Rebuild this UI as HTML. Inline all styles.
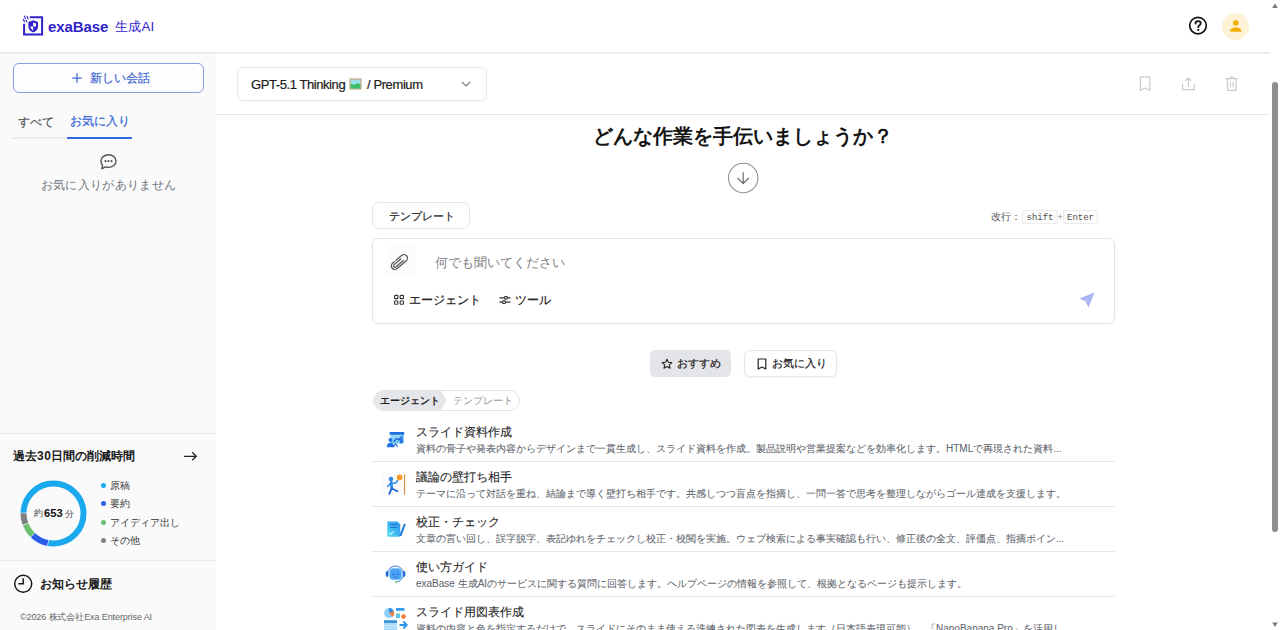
<!DOCTYPE html>
<html lang="ja"><head><meta charset="utf-8">
<style>
*{box-sizing:border-box;margin:0;padding:0}
html,body{width:1280px;height:630px;overflow:hidden;background:#fff}
body{font-family:"Liberation Sans",sans-serif;color:#1f2328;position:relative}
.a{position:absolute;white-space:nowrap}
.hdr{left:0;top:0;width:1270px;height:54px;border-bottom:2px solid #ececec;background:#fff}
.side{left:0;top:54px;width:216px;height:576px;background:#fafafa}
.ln{position:absolute;height:1px;background:#e8e8e8}
.t{line-height:1;position:absolute;white-space:nowrap}
.kbd{position:absolute;top:209.5px;height:14px;padding-top:1px;border:1px solid #ececec;border-radius:2px;background:#fcfcfc;font-family:"Liberation Mono",monospace;font-size:9px;line-height:12px;color:#505050;text-align:center}
.row-t{position:absolute;left:416px;font-size:11.6px;line-height:14px;color:#1e1e1e;-webkit-text-stroke:0.1px #1e1e1e}
.row-d{position:absolute;left:416px;font-size:10px;line-height:12px;color:#63676e;-webkit-text-stroke:0.08px #63676e;width:650px;overflow:hidden;white-space:nowrap}
.md{-webkit-text-stroke:0.2px currentColor}
.sep{position:absolute;left:372px;width:743px;height:1px;background:#e9e9eb}
</style></head><body>

<!-- header -->
<div class="a hdr"></div>
<svg class="a" style="left:18px;top:10px" width="32" height="32" viewBox="18 10 32 32">
  <path d="M29.8 17.35 H42.1 V34.6 H24.1 V23.7" fill="none" stroke="#2f22c9" stroke-width="2"/>
  <path d="M24.2 15.9 L25.3 18.5 M26.9 16.3 L28.2 18.9 M23.3 19.3 L24.4 21.7 M26 20.1 L26.9 21.9" stroke="#2f22c9" stroke-width="1.1" stroke-linecap="round"/>
  <path d="M33.2 20.2 L38 21.9 V26.5 C38 29.5 36 31.5 33.2 32.6 C30.4 31.5 28.4 29.5 28.4 26.5 V21.9 Z" fill="#2f22c9"/>
  <path d="M33.2 22.6 L36 23.5 V26.5 H33.2 Z M30.3 26.5 H33.2 V30.4 C31.7 29.6 30.6 28.3 30.3 26.5 Z" fill="#fff"/>
</svg>
<div class="t" style="left:48px;top:18.6px;font-size:15px;font-weight:bold;color:#2f22c9;letter-spacing:-0.1px">exaBase</div>
<div class="t" style="left:115px;top:20px;font-size:13.2px;color:#2f22c9;letter-spacing:0.2px">生成AI</div>

<svg class="a" style="left:1188px;top:16px" width="20" height="20" viewBox="0 0 20 20">
  <circle cx="10" cy="9.6" r="8.3" fill="none" stroke="#111" stroke-width="1.7"/>
  <path d="M7.5 7.6 C7.5 6 8.7 5.1 10.1 5.1 C11.6 5.1 12.7 6 12.7 7.4 C12.7 9 10.3 9.3 10.3 11.2" fill="none" stroke="#111" stroke-width="1.8" stroke-linecap="round"/>
  <circle cx="10.3" cy="13.9" r="1.1" fill="#111"/>
</svg>
<div class="a" style="left:1222px;top:12.6px;width:27.4px;height:27.4px;border-radius:50%;background:#fdf2d6"></div>
<svg class="a" style="left:1226px;top:17px" width="19" height="19" viewBox="0 0 19 19">
  <circle cx="9.8" cy="6" r="2.8" fill="#f2b000"/>
  <path d="M4.4 14.8 V13.2 C4.4 11.3 6.8 10.4 9.8 10.4 C12.8 10.4 15.2 11.3 15.2 13.2 V14.8 Z" fill="#f2b000"/>
</svg>

<!-- scrollbar -->
<div class="a" style="left:1270px;top:0;width:10px;height:630px;background:#fff"></div>
<svg class="a" style="left:1270px;top:0" width="10" height="630">
  <path d="M2.2 8 L5 3.5 L7.8 8 Z" fill="#7a7a7a"/>
  <path d="M2.2 622.5 L5 627 L7.8 622.5 Z" fill="#7a7a7a"/>
  <rect x="2" y="82" width="6" height="450" rx="3" fill="#8e8e8e"/>
</svg>

<!-- sidebar -->
<div class="a side"></div>
<div class="a" style="left:13px;top:63px;width:191px;height:30px;border:1px solid #8a9de0;border-radius:6px;background:#fdfdff"></div>
<svg class="a" style="left:71px;top:72px" width="12" height="12" viewBox="0 0 12 12"><path d="M6 1.2 V10.8 M1.2 6 H10.8" stroke="#3f68d0" stroke-width="1.25"/></svg>
<div class="t md" style="left:90px;top:72px;font-size:11.5px;line-height:13px;color:#3f68d0">新しい会話</div>

<div class="t md" style="left:18px;top:114.5px;font-size:11.5px;line-height:14px;color:#555">すべて</div>
<div class="t md" style="left:70px;top:114px;font-size:12px;line-height:14px;color:#2f63d6">お気に入り</div>
<div class="a" style="left:12px;top:137px;width:54px;height:2px;background:#ececec"></div>
<div class="a" style="left:67px;top:137px;width:65px;height:2px;background:#2f6ad8"></div>

<svg class="a" style="left:99px;top:153px" width="19" height="18" viewBox="0 0 19 18">
  <path d="M9.5 1.8 C13.8 1.8 17 4.6 17 8.1 C17 11.6 13.8 14.4 9.5 14.4 C8.4 14.4 7.4 14.2 6.5 13.9 L2.8 15.8 L3.6 12.4 C2.6 11.2 2 9.7 2 8.1 C2 4.6 5.2 1.8 9.5 1.8 Z" fill="none" stroke="#555" stroke-width="1.4" stroke-linejoin="round"/>
  <circle cx="6.5" cy="8.1" r="1.1" fill="#555"/><circle cx="9.5" cy="8.1" r="1.1" fill="#555"/><circle cx="12.5" cy="8.1" r="1.1" fill="#555"/>
</svg>
<div class="t" style="left:40.5px;top:178px;font-size:12px;line-height:14px;color:#73767b;letter-spacing:0.35px">お気に入りがありません</div>

<div class="ln" style="left:0;top:433px;width:216px"></div>
<div class="t" style="left:13px;top:449px;font-size:12px;line-height:14px;font-weight:bold;color:#1a1a1a">過去<span style="letter-spacing:0.5px">30</span>日間の削減時間</div>
<svg class="a" style="left:182px;top:449px" width="16" height="14" viewBox="0 0 16 14"><path d="M2 7.3 H14.3 M10.2 3.3 L14.3 7.3 L10.2 11.3" fill="none" stroke="#222" stroke-width="1.25"/></svg>

<svg class="a" style="left:20px;top:480px" width="67" height="67" viewBox="-33.5 -33.5 67 67"><g transform="rotate(-90)" fill="none" stroke-width="6"><circle r="30" stroke="#1aa9ee" stroke-dasharray="145.87 42.62" stroke-dashoffset="-141.90"/><circle r="30" stroke="#2a5ee8" stroke-dasharray="16.91 171.58" stroke-dashoffset="-99.90"/><circle r="30" stroke="#6bbf6e" stroke-dasharray="12.51 175.98" stroke-dashoffset="-117.44"/><circle r="30" stroke="#808080" stroke-dasharray="10.68 177.81" stroke-dashoffset="-130.59"/></g></svg>
<div class="t" style="left:34px;top:507px;font-size:9px;line-height:12px;color:#444">約</div>
<div class="t" style="left:44px;top:507px;font-size:11.2px;line-height:13px;font-weight:bold;color:#111">653</div>
<div class="t" style="left:64.5px;top:507.5px;font-size:8.6px;line-height:12px;color:#444">分</div>

<div class="a" style="left:101px;top:483px;width:5px;height:5px;border-radius:50%;background:#1aa9ee"></div>
<div class="a" style="left:101px;top:501px;width:5px;height:5px;border-radius:50%;background:#2a5ee8"></div>
<div class="a" style="left:101px;top:520px;width:5px;height:5px;border-radius:50%;background:#6bbf6e"></div>
<div class="a" style="left:101px;top:538px;width:5px;height:5px;border-radius:50%;background:#808080"></div>
<div class="t" style="left:110px;top:479px;font-size:10px;line-height:13px;color:#333">原稿</div>
<div class="t" style="left:110px;top:497px;font-size:10px;line-height:13px;color:#333">要約</div>
<div class="t" style="left:110px;top:516px;font-size:10px;line-height:13px;color:#333">アイディア出し</div>
<div class="t" style="left:110px;top:534px;font-size:10px;line-height:13px;color:#333">その他</div>

<div class="ln" style="left:0;top:560px;width:216px"></div>
<svg class="a" style="left:13px;top:574px" width="20" height="20" viewBox="0 0 20 20">
  <circle cx="10.2" cy="9.8" r="8.5" fill="none" stroke="#1a1a1a" stroke-width="1.5"/>
  <path d="M10.2 4.3 V9.8 H5.3" fill="none" stroke="#1a1a1a" stroke-width="1.5"/>
</svg>
<div class="t" style="left:40px;top:577px;font-size:11.6px;line-height:14px;font-weight:bold;color:#1a1a1a">お知らせ履歴</div>
<div class="t" style="left:20px;top:612px;font-size:9px;line-height:11px;color:#666;letter-spacing:-0.1px">©2026 株式会社Exa Enterprise AI</div>

<!-- main toolbar -->
<div class="ln" style="left:216px;top:114px;width:1054px"></div>
<div class="a" style="left:237px;top:67px;width:250px;height:34px;border:1px solid #e8e8e8;border-radius:6px;background:#fff;box-shadow:0 1px 2px rgba(0,0,0,0.04)"></div>
<div class="t" style="left:251px;top:77px;font-size:13px;line-height:15px;color:#1a1a1a;letter-spacing:-0.42px;-webkit-text-stroke:0.2px #1a1a1a">GPT-5.1 Thinking</div>
<svg class="a" style="left:349px;top:78px" width="13" height="12" viewBox="0 0 14 14" preserveAspectRatio="none">
  <rect x="0.5" y="0.5" width="13" height="13" fill="#c9a27c"/>
  <rect x="1.8" y="1.8" width="10.4" height="10.4" fill="#9fe0e8"/>
  <path d="M1.8 6.5 L5 8 L9 6 L12.2 7 V12.2 H1.8 Z" fill="#3cc06a"/>
</svg>
<div class="t" style="left:367px;top:77px;font-size:13px;line-height:15px;color:#1a1a1a;letter-spacing:-0.4px;-webkit-text-stroke:0.2px #1a1a1a">/ Premium</div>
<svg class="a" style="left:460px;top:80px" width="12" height="8" viewBox="0 0 12 8"><path d="M2 2 L6 6 L10 2" fill="none" stroke="#777" stroke-width="1.1"/></svg>

<svg class="a" style="left:1137px;top:75px" width="17" height="17" viewBox="0 0 17 17"><path d="M3.4 1.8 H12.8 V15.4 L8.1 12.9 L3.4 15.4 Z" fill="none" stroke="#c9c9c9" stroke-width="1.15" stroke-linejoin="round"/></svg>
<svg class="a" style="left:1180px;top:75px" width="17" height="17" viewBox="0 0 17 17"><path d="M8.3 3.2 V11.5 M5.6 5.6 L8.3 2.9 L11 5.6 M2.6 9.2 V14.6 H14.2 V9.2" fill="none" stroke="#c9c9c9" stroke-width="1.15" stroke-linejoin="round" stroke-linecap="round"/></svg>
<svg class="a" style="left:1223px;top:75px" width="17" height="17" viewBox="0 0 17 17"><path d="M2.8 3.6 H14.6 M6.6 3.4 C6.6 2.3 7.4 1.7 8.7 1.7 C10 1.7 10.8 2.3 10.8 3.4 M4.1 3.6 L4.5 15.3 H12.9 L13.3 3.6 M7.3 6.6 V12.3 M10.1 6.6 V12.3" fill="none" stroke="#c9c9c9" stroke-width="1.15" stroke-linejoin="round"/></svg>

<!-- hero -->
<div class="t" style="left:593px;top:126px;width:300px;text-align:center;font-size:20px;line-height:20px;font-weight:bold;color:#141414">どんな作業を手伝いましょうか？</div>
<svg class="a" style="left:727px;top:162px" width="32" height="32" viewBox="0 0 32 32">
  <circle cx="16.2" cy="16" r="14.7" fill="#fff" stroke="#8f9296" stroke-width="1.1"/>
  <path d="M16.2 10.2 V21.2 M10.4 15.8 L16.2 21.4 L22 15.8" fill="none" stroke="#5c6168" stroke-width="1.1"/>
</svg>

<!-- composer -->
<div class="a" style="left:371.5px;top:202px;width:98px;height:27px;border:1px solid #e6e6e6;border-radius:7px;background:#fff"></div>
<div class="t md" style="left:389px;top:209.5px;font-size:11px;line-height:13px;color:#2a2a2a">テンプレート</div>
<div class="t" style="left:991px;top:210.5px;font-size:10px;line-height:12px;color:#555">改行：</div>
<div class="kbd" style="left:1022px;width:36px">shift</div>
<div class="t" style="left:1057.5px;top:211px;font-size:9px;line-height:12px;color:#888">+</div>
<div class="kbd" style="left:1063px;width:35px">Enter</div>

<div class="a" style="left:372px;top:238px;width:743px;height:86px;border:1px solid #e4e4e4;border-radius:6px;background:#fff;box-shadow:0 1px 3px rgba(0,0,0,0.04)"></div>
<div class="a" style="left:386px;top:245px;width:30px;height:32px;border-radius:4px;background:#fcfcfc"></div>
<svg class="a" style="left:386px;top:248px" width="28" height="28" viewBox="-14 -14 28 28">
  <g transform="translate(-0.6,0) rotate(-41)" fill="none" stroke="#555" stroke-width="1.25" stroke-linecap="round">
    <path d="M-1.5 -3.5 H6 A3.5 3.5 0 0 1 6 3.5 H-6 A3.5 3.5 0 0 1 -6 -3.5 H-3.5"/>
    <path d="M3 -1.4 H-6 A1.4 1.4 0 0 0 -6 1.4 H4"/>
  </g>
</svg>
<div class="t" style="left:434.5px;top:254.5px;font-size:13.2px;line-height:15px;color:#7f8288">何でも聞いてください</div>

<svg class="a" style="left:393px;top:294px" width="12" height="12" viewBox="0 0 12 12" fill="none" stroke="#333" stroke-width="1.1">
  <rect x="1.55" y="1.35" width="3.3" height="3.3" rx="0.7"/><rect x="7.15" y="1.35" width="3.3" height="3.3" rx="0.7"/>
  <rect x="1.55" y="6.95" width="3.3" height="3.3" rx="0.7"/><rect x="7.15" y="6.95" width="3.3" height="3.3" rx="0.7"/>
</svg>
<div class="t md" style="left:409px;top:293px;font-size:12px;line-height:14px;color:#222">エージェント</div>
<svg class="a" style="left:498px;top:293px" width="14" height="14" viewBox="0 0 14 14" fill="none" stroke="#333" stroke-width="1.2">
  <path d="M1.5 4.8 H6.5 M9.5 4.8 H12.5 M1.5 9.2 H4.5 M7.5 9.2 H12.5"/>
  <circle cx="8" cy="4.8" r="1.5"/><circle cx="6" cy="9.2" r="1.5"/>
</svg>
<div class="t md" style="left:515px;top:293px;font-size:12px;line-height:14px;color:#222">ツール</div>
<svg class="a" style="left:1078px;top:291px" width="18" height="18" viewBox="0 0 18 18">
  <path d="M16.5 1.5 L1.5 7.5 L7.5 10.5 L10.5 16.5 Z" fill="#a9b6f5"/>
  <path d="M7.2 10.8 L9.2 8.8" stroke="#fff" stroke-width="0.8"/>
</svg>

<!-- tabs -->
<div class="a" style="left:650px;top:350px;width:81px;height:27px;border-radius:5px;background:#e3e5e8"></div>
<svg class="a" style="left:661px;top:358px" width="12" height="12" viewBox="0 0 12 12"><path d="M6 1.2 L7.45 4.3 L10.8 4.65 L8.3 6.9 L9 10.2 L6 8.5 L3 10.2 L3.7 6.9 L1.2 4.65 L4.55 4.3 Z" fill="none" stroke="#222" stroke-width="1.1" stroke-linejoin="round"/></svg>
<div class="t md" style="left:677px;top:357px;font-size:11px;line-height:13px;color:#222">おすすめ</div>
<div class="a" style="left:744px;top:350px;width:93px;height:27px;border:1px solid #e6e6e6;border-radius:6px;background:#fff;box-shadow:0 1px 2px rgba(0,0,0,0.05)"></div>
<svg class="a" style="left:757px;top:357.5px" width="10" height="12" viewBox="0 0 10 12"><path d="M1.2 1 H8.8 V11 L5 9 L1.2 11 Z" fill="none" stroke="#222" stroke-width="1.2" stroke-linejoin="round"/></svg>
<div class="t md" style="left:772px;top:357px;font-size:11px;line-height:13px;color:#222">お気に入り</div>

<!-- segment -->
<div class="a" style="left:373px;top:390px;width:147px;height:21px;border:1px solid #e4e4e4;border-radius:10.5px;background:#fff"></div>
<svg class="a" style="left:374px;top:391px" width="74" height="19" viewBox="0 0 74 19"><path d="M9.5 0 H67 L72.5 9.5 L67 19 H9.5 A9.5 9.5 0 0 1 9.5 0 Z" fill="#e4e6e9"/></svg>
<div class="t" style="left:379.6px;top:394.6px;font-size:10px;line-height:12px;font-weight:bold;color:#222">エージェント</div>
<div class="t" style="left:452.6px;top:394.6px;font-size:10px;line-height:12px;color:#95979b">テンプレート</div>

<!-- list rows -->
<svg class="a" style="left:382px;top:425px" width="28" height="28" viewBox="382 425 28 28">
  <defs><linearGradient id="g1" x1="0" y1="0" x2="0" y2="1"><stop offset="0" stop-color="#9fdcfb"/><stop offset="1" stop-color="#6cc2f5"/></linearGradient></defs>
  <rect x="390.5" y="434" width="13" height="9.5" fill="url(#g1)"/>
  <rect x="389.6" y="432" width="14.6" height="2.7" rx="0.6" fill="#1f6fe0"/>
  <path d="M402.8 434.5 V443" stroke="#2a7fe6" stroke-width="1"/>
  <path d="M393.5 441.5 L397 438.5 L399 440 L401.5 436.5" fill="none" stroke="#1a66d8" stroke-width="1.3"/>
  <rect x="400.3" y="438.8" width="1.8" height="4.5" fill="#1a66d8"/>
  <path d="M395.5 443.5 L393.5 447 M395.5 443.5 L397.8 447" stroke="#1a66d8" stroke-width="1.1"/>
  <circle cx="390.4" cy="440" r="1.9" fill="#1e70e6"/>
  <path d="M386.8 447.2 C386.8 444.2 388.3 442.8 390.4 442.8 C392.5 442.8 394 444.2 394 447.2 Z" fill="#1e70e6"/>
</svg>
<div class="row-t" style="top:425px">スライド資料作成</div>
<div class="row-d" style="top:443px">資料の骨子や発表内容からデザインまで一貫生成し、スライド資料を作成。製品説明や営業提案などを効率化します。HTMLで再現された資料...</div>
<div class="sep" style="top:461px"></div>

<svg class="a" style="left:381px;top:469px" width="30" height="30" viewBox="381 469 30 30">
  <rect x="382.5" y="472" width="22" height="23" fill="#fbfbfb"/>
  <rect x="404" y="474.2" width="1.1" height="20.5" fill="#d98a45"/>
  <circle cx="399.6" cy="477.4" r="2.8" fill="#f5991f"/>
  <circle cx="391" cy="479" r="2.3" fill="#2f8ce8"/>
  <path d="M391.2 482.5 L391.8 488.5" stroke="#2f8ce8" stroke-width="2.8" stroke-linecap="round"/>
  <path d="M391.5 483 L395.5 483.3 L397.5 480.5 M390.5 483.2 L387.8 486.5" fill="none" stroke="#2f8ce8" stroke-width="1.5" stroke-linecap="round" stroke-linejoin="round"/>
  <path d="M391.6 488.5 L389.3 493.8 M391.8 488.5 L395.8 490.5 L397.2 491.2" fill="none" stroke="#2468d8" stroke-width="1.9" stroke-linecap="round" stroke-linejoin="round"/>
</svg>
<div class="row-t" style="top:470px">議論の壁打ち相手</div>
<div class="row-d" style="top:488px">テーマに沿って対話を重ね、結論まで導く壁打ち相手です。共感しつつ盲点を指摘し、一問一答で思考を整理しながらゴール達成を支援します。</div>
<div class="sep" style="top:506px"></div>

<svg class="a" style="left:382px;top:514px" width="28" height="28" viewBox="382 514 28 28">
  <defs><linearGradient id="g3" x1="0" y1="1" x2="1" y2="0"><stop offset="0" stop-color="#4fe0f5"/><stop offset="1" stop-color="#2f8fe8"/></linearGradient></defs>
  <path d="M387.3 521.6 H397.5 L400.2 524.3 V536.7 H387.3 Z" fill="url(#g3)"/>
  <path d="M389.8 524.6 H396.8 M389.8 527.3 H397.2" stroke="#1f6fd8" stroke-width="1"/>
  <path d="M389 532.5 L390.8 534.3 L393.5 531.5" fill="none" stroke="#c8f7ff" stroke-width="1.1"/>
  <path d="M399.2 535.5 L404 523.5 L405.8 524.3 L401.5 536.3 Z" fill="#2a82e0"/>
</svg>
<div class="row-t" style="top:515px">校正・チェック</div>
<div class="row-d" style="top:533px">文章の言い回し、誤字脱字、表記ゆれをチェックし校正・校閲を実施。ウェブ検索による事実確認も行い、修正後の全文、評価点、指摘ポイン...</div>
<div class="sep" style="top:551px"></div>

<svg class="a" style="left:381px;top:559px" width="30" height="30" viewBox="381 559 30 30">
  <path d="M387.5 574 A8 8 0 0 1 403.5 574 A8 8 0 0 1 396.5 582" fill="none" stroke="#2f6fd0" stroke-width="0.9"/>
  <rect x="385.8" y="571.3" width="2.6" height="5.4" rx="1.2" fill="#1f66d8"/>
  <rect x="402.7" y="571.3" width="2.6" height="5.4" rx="1.2" fill="#1f66d8"/>
  <rect x="389.6" y="568.3" width="12" height="11.4" rx="3.5" fill="#4aa2f4" stroke="#8fd6fb" stroke-width="0.6"/>
  <path d="M392 575 L393.3 573.8 L394.6 575 M396.8 574.2 H399.2" fill="none" stroke="#1c5fc8" stroke-width="0.9"/>
  <path d="M393.5 577.3 H397.5" stroke="#2a70d8" stroke-width="0.9"/>
  <circle cx="396" cy="582.3" r="1" fill="#6cc46c"/>
</svg>
<div class="row-t" style="top:560px">使い方ガイド</div>
<div class="row-d" style="top:578px">exaBase 生成AIのサービスに関する質問に回答します。ヘルプページの情報を参照して、根拠となるページも提示します。</div>
<div class="sep" style="top:596px"></div>

<svg class="a" style="left:378px;top:600px" width="34" height="30" viewBox="378 600 34 30">
  <circle cx="389.1" cy="613.1" r="5" fill="#8ccff6"/>
  <path d="M389.1 613.1 V608.1 A5 5 0 0 1 393.6 611 Z" fill="#2a86e0"/>
  <path d="M389.1 613.1 L393.6 611 A5 5 0 0 1 392.5 616.8 Z" fill="#f07a3a"/>
  <rect x="396" y="608" width="8.5" height="2.8" fill="#3b9be8"/>
  <rect x="396" y="613.5" width="4" height="4.5" fill="#5cc3e0"/>
  <circle cx="403.5" cy="616.5" r="2.3" fill="#f07a3a"/>
  <rect x="384" y="620.3" width="13" height="2.6" fill="#2a90d8"/>
  <rect x="384" y="623" width="13" height="7" fill="#a6d8fa"/>
  <path d="M384 625.5 H397 M384 628 H397" stroke="#eaf6ff" stroke-width="0.6"/>
  <path d="M399.5 625 H406.5 M403.3 621.5 L406.8 625 L403.3 628.5" fill="none" stroke="#2a95e6" stroke-width="1.8"/>
</svg>
<div class="row-t" style="top:605px">スライド用図表作成</div>
<div class="row-d" style="top:623px">資料の内容と色を指定するだけで、スライドにそのまま使える洗練された図表を生成します（日本語表現可能）。「NanoBanana Pro」を活用し...</div>

</body></html>
